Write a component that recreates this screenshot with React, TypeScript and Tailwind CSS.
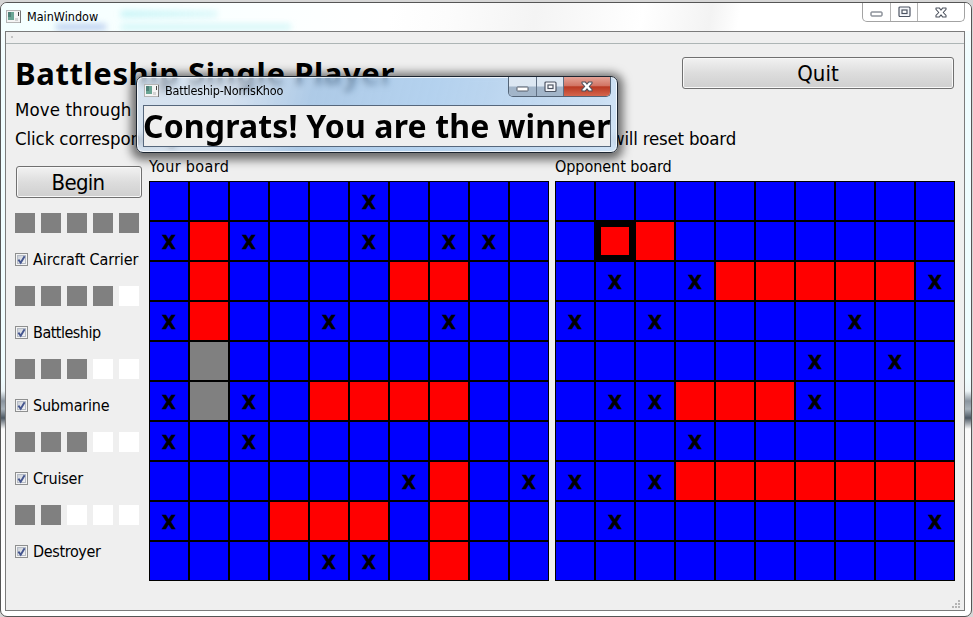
import React from "react";

const YOURS = [
  ".....X....",
  "XRX..X.XX.",
  ".R....RR..",
  "XR..X..X..",
  ".G........",
  "XGX.RRRR..",
  "X.X.......",
  "......XR.X",
  "X..RRR.R..",
  "....XX.R..",
];

const OPPONENT = [
  "..........",
  ".SR.......",
  ".X.XRRRRRX",
  "X.X....X..",
  "......X.X.",
  ".XXRRRX...",
  "...X......",
  "X.XRRRRRRR",
  ".X.......X",
  "..........",
];

const SHIPS = [
  { name: "Aircraft Carrier", size: 5, fit: "tracking-[-0.05px]" },
  { name: "Battleship", size: 4, fit: "tracking-[-0.5px]" },
  { name: "Submarine", size: 3, fit: "tracking-[-0.2px]" },
  { name: "Cruiser", size: 3, fit: "tracking-[-0.2px]" },
  { name: "Destroyer", size: 2, fit: "tracking-[-0.35px]" },
];

const CELL: Record<string, string> = {
  ".": "border bg-[#0000ff]",
  X: "border bg-[#0000ff]",
  R: "border bg-[#ff0000]",
  G: "border bg-[#808080]",
  S: "border-[6px] bg-[#ff0000]",
};

function Board({ rows }: { rows: string[] }) {
  return (
    <div className="grid w-[400px] grid-cols-10">
      {rows.flatMap((row, r) =>
        row.split("").map((c, i) => (
          <div
            key={r + "-" + i}
            className={"flex h-10 items-center justify-center border-black pt-px text-[20px] leading-none font-bold text-black [-webkit-text-stroke:0.5px_black] " + CELL[c]}
          >
            {c === "X" ? "X" : ""}
          </div>
        ))
      )}
    </div>
  );
}

function AppIcon() {
  return (
    <svg width="15" height="13" viewBox="0 0 15 13" className="shrink-0" shapeRendering="crispEdges">
      <rect x="0.5" y="0.5" width="14" height="12" fill="#f4f4f4" stroke="#b5b5b5" />
      <rect x="14" y="1" width="1" height="12" fill="#777" />
      <rect x="2" y="2" width="6" height="8" fill="#6aa594" />
      <rect x="2" y="2" width="3" height="5" fill="#4f8178" />
      <rect x="9" y="8" width="3" height="3" fill="#d4d4d4" />
      <rect x="12" y="2" width="1" height="4" fill="#444" />
    </svg>
  );
}

function MinGlyph() {
  return (
    <svg width="13" height="6" viewBox="0 0 13 6">
      <rect x="1" y="1" width="11" height="4" rx="0.6" fill="#fff" stroke="#555c68" />
    </svg>
  );
}

function MaxGlyph() {
  return (
    <svg width="13" height="12" viewBox="0 0 13 12">
      <rect x="1" y="1" width="11" height="9.5" rx="1" fill="#f4f6fa" stroke="#4d5563" strokeWidth="1.2" />
      <rect x="4" y="4" width="5" height="3.5" fill="#fff" stroke="#4d5563" strokeWidth="1.2" />
    </svg>
  );
}

function CloseGlyph() {
  return (
    <svg width="12" height="11" viewBox="0 0 13 12">
      <path
        d="M1 1h3.6l1.9 2.4L8.4 1H12v1.5L8.9 6 12 9.2V11H8.4L6.5 8.6 4.6 11H1V9.2L4.1 6 1 2.5z"
        fill="#fff"
        stroke="#4a505c"
        strokeWidth="1.1"
        strokeLinejoin="round"
      />
    </svg>
  );
}

function Checkbox() {
  return (
    <span className="-mt-px flex size-[13px] shrink-0 items-center justify-center border border-[#8e8f8f] bg-[#f4f4f4]">
      <span className="flex size-[9px] items-center justify-center border border-[#b6bcc6] bg-linear-to-br from-[#cbd0d8] to-[#f5f5f5]">
        <svg width="9" height="10" viewBox="0 0 9 10" className="shrink-0 overflow-visible">
          <path d="M1.4 4.6 3.7 7.7 7.6 1.2" fill="none" stroke="#45568f" strokeWidth="1.9" />
        </svg>
      </span>
    </span>
  );
}

const BUTTON =
  "flex shrink-0 items-center justify-center rounded-[3px] border border-[#707070] bg-linear-to-b from-[#f2f2f2] from-0% via-[#dddddd] via-50% to-[#cfcfcf] text-[22px] leading-none shadow-[inset_0_0_0_1px_#f8f8f8]";

export default function App() {
  return (
    <div className="relative flex h-[617px] w-[973px] overflow-hidden bg-[#d6d6d6] pt-[2px] font-['DejaVu_Sans_Condensed','DejaVu_Sans',sans-serif] text-black [font-stretch:condensed]">
      <div className="relative flex h-[615px] w-[972px] flex-col overflow-hidden rounded-[7px] border border-[#555] bg-[linear-gradient(to_bottom,#fdfdfd_0,#effdff_60px,#effdff_375px,#edf5f8_388px,#8a949e_398px,#a8b2ba_406px,#4d5863_415px,#fbfbfb_426px,#fff_100%)] pl-[4px]">
        <header className="relative -ml-[4px] flex h-[28px] w-[970px] shrink-0 items-start justify-between overflow-hidden bg-[linear-gradient(100deg,#f4ffff_0,#ffffff_40%,#fcfcfc_46%,#f4f4f4_55%,#fff_66%,#f3f3f3_73%,#fff_76%)] pr-[6px] pl-[5px]">
          <div className="absolute top-[8px] left-[120px] h-[6px] w-[96px] bg-linear-to-r from-[#8be7ec]/50 to-[#8be7ec]/30 blur-[3px]" />
          <div className="absolute top-[21px] left-[55px] h-[6px] w-[50px] bg-[#7d9ee0]/50 blur-[3px]" />
          <div className="absolute top-[21px] left-[120px] h-[6px] w-[170px] bg-[#8be7ec]/35 blur-[3px]" />
          <div className="relative flex items-center gap-[6px] pt-[6px]">
            <AppIcon />
            <span className="text-[12.5px] leading-[15px]">MainWindow</span>
          </div>
          <div className="relative flex h-[19px] w-[103px] rounded-b-[5px] border border-t-0 border-[#a3a3a3] bg-white/60">
            <div className="flex w-[28px] items-center justify-center border-r border-[#b4b4b4] pt-[4px]"><MinGlyph /></div>
            <div className="flex w-[27px] items-center justify-center border-r border-[#b4b4b4]"><MaxGlyph /></div>
            <div className="flex flex-1 items-center justify-center"><CloseGlyph /></div>
          </div>
        </header>

        <main className="relative flex h-[580px] w-[960px] shrink-0 flex-col border border-[#7b7b7b] bg-[#efefef]">
          <div className="h-[12px] shrink-0 border-b border-[#adb5b5] pt-[4px] pl-[5px]">
            <div className="size-[2px] bg-[#c4c4c4]" />
          </div>
          <section className="flex h-[109px] shrink-0 justify-between pr-[10px] pl-[9px]">
            <div className="min-w-0 whitespace-nowrap">
              <h1 className="mt-[10px] font-['Noto_Sans'] text-[31px] leading-[38px] font-bold tracking-[0.6px] [font-stretch:normal]">Battleship Single Player</h1>
              <p className="mt-[3px] text-[18.5px] leading-[29px] tracking-[0.1px]">Move through</p>
              <p className="flex text-[18.5px] leading-[29px] tracking-[-0.1px]">
                <span className="w-[596px] shrink-0">Click corresponding</span>
                <span className="shrink-0 tracking-[-0.2px]">will reset board</span>
              </p>
            </div>
            <button className={BUTTON + " mt-[13px] h-[32px] w-[272px] pt-[2px]"}>Quit</button>
          </section>

          <div className="flex pl-[9px]">
            <aside className="w-[134px] pt-[13px]">
              <button className={BUTTON + " ml-px h-[32px] w-[126px] pr-[2px] pt-px tracking-[-0.7px]"}>Begin</button>
              <div className="pt-[15px]">
                {SHIPS.map((s) => (
                  <div key={s.name} className="h-[73px]">
                    <div className="flex gap-[6px]">
                      {[0, 1, 2, 3, 4].map((n) => (
                        <div key={n} className={"size-5 " + (n < s.size ? "bg-[#808080]" : "bg-white")} />
                      ))}
                    </div>
                    <label className="mt-[17px] flex h-[20px] items-center gap-[5px] text-[16px] leading-[20px] whitespace-nowrap">
                      <Checkbox />
                      <span className={s.fit}>{s.name}</span>
                    </label>
                  </div>
                ))}
              </div>
            </aside>
            <div className="flex gap-[6px] pt-[4px]">
              <div>
                <h2 className="h-[24px] text-[16px] leading-[20px] tracking-[0.35px]">Your board</h2>
                <Board rows={YOURS} />
              </div>
              <div>
                <h2 className="h-[24px] text-[16px] leading-[20px] tracking-[-0.05px]">Opponent board</h2>
                <Board rows={OPPONENT} />
              </div>
            </div>
          </div>
          <svg width="9" height="9" viewBox="0 0 9 9" className="absolute right-[3px] bottom-[1px]" fill="#b4b4b4">
            <path d="M6 0h2v2H6zM3 3h2v2H3zM6 3h2v2H6zM0 6h2v2H0zM3 6h2v2H3zM6 6h2v2H6z" />
          </svg>
        </main>
      </div>

      <div className="absolute top-[76px] left-[136px] h-[77px] w-[482px] rounded-[7px] border border-[#1c2530] bg-[linear-gradient(105deg,rgba(205,222,240,0.7)_0,rgba(200,218,238,0.7)_20%,rgba(152,190,228,0.75)_36%,rgba(165,202,238,0.8)_60%,rgba(188,214,240,0.85)_85%,rgba(205,225,245,0.9)_100%)] pr-[6px] pl-[6px] shadow-[inset_0_0_0_1px_rgba(255,255,255,0.75),0_2px_10px_5px_rgba(0,0,0,0.55)] backdrop-blur-[3px]">
        <div className="flex h-[28px] items-start justify-between">
          <div className="flex items-center gap-[6px] pt-[6px] pl-px">
            <AppIcon />
            <span className="text-[12.5px] leading-[15px] tracking-[-0.2px]">Battleship-NorrisKhoo</span>
          </div>
          <div className="flex h-[20px] w-[103px] overflow-hidden rounded-b-[5px] border border-t-0 border-[#536477]">
            <div className="flex w-[28px] items-center justify-center border-r border-[#607084] bg-linear-to-b from-[#dce7f2] from-45% to-[#a2b5c9] to-55% pt-[4px]"><MinGlyph /></div>
            <div className="flex w-[27px] items-center justify-center border-r border-[#607084] bg-linear-to-b from-[#dce7f2] from-45% to-[#a2b5c9] to-55%"><MaxGlyph /></div>
            <div className="flex flex-1 items-center justify-center bg-[linear-gradient(to_bottom,#e5a397_0,#d27565_45%,#b93923_52%,#d5664d_100%)]"><CloseGlyph /></div>
          </div>
        </div>
        <div className="flex h-[42px] items-center border border-[#56677c] bg-[#efefef]">
          <span className="-ml-px font-['Noto_Sans'] text-[32px] leading-[40px] font-bold tracking-[0.15px] whitespace-nowrap [font-stretch:normal]">Congrats! You are the winner</span>
        </div>
      </div>
    </div>
  );
}
